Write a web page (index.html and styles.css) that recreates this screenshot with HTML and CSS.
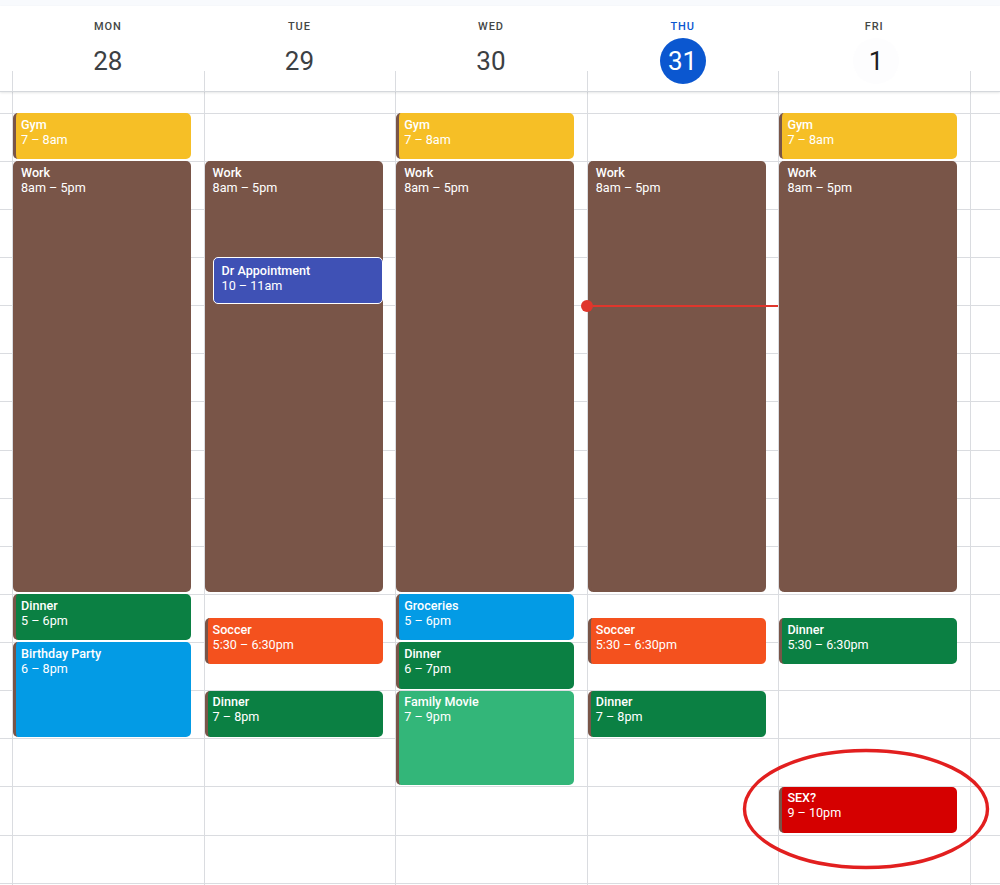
FILE: index.html
```html
<!DOCTYPE html>
<html>
<head>
<meta charset="utf-8">
<link rel="stylesheet" href="styles.css">
</head>
<body>
<div class="page">
  <div class="topband"></div>
  <div class="header">
    <div class="gutter"></div>
    <div class="day"><div class="dname">MON</div><div class="dnum">28</div></div>
    <div class="day"><div class="dname">TUE</div><div class="dnum">29</div></div>
    <div class="day"><div class="dname">WED</div><div class="dnum">30</div></div>
    <div class="day today"><div class="dname">THU</div><div class="dnum">31</div></div>
    <div class="day hover"><div class="dname">FRI</div><div class="dnum">1</div></div>
    <div class="day"></div>
  </div>
  <div class="body">
    <div class="gutter"></div>
    <div class="col">
      <div class="ev gym" style="grid-row: 2 / span 4"><b>Gym</b>7 – 8am</div>
      <div class="ev work" style="grid-row: 6 / span 36"><b>Work</b>8am – 5pm</div>
      <div class="ev basil" style="grid-row: 42 / span 4"><b>Dinner</b>5 – 6pm</div>
      <div class="ev peacock" style="grid-row: 46 / span 8"><b>Birthday Party</b>6 – 8pm</div>
    </div>
    <div class="col">
      <div class="ev work" style="grid-row: 6 / span 36"><b>Work</b>8am – 5pm</div>
      <div class="ev appt" style="grid-row: 14 / span 4"><b>Dr Appointment</b>10 – 11am</div>
      <div class="ev tangerine" style="grid-row: 44 / span 4"><b>Soccer</b>5:30 – 6:30pm</div>
      <div class="ev basil" style="grid-row: 50 / span 4"><b>Dinner</b>7 – 8pm</div>
    </div>
    <div class="col">
      <div class="ev gym" style="grid-row: 2 / span 4"><b>Gym</b>7 – 8am</div>
      <div class="ev work" style="grid-row: 6 / span 36"><b>Work</b>8am – 5pm</div>
      <div class="ev peacock" style="grid-row: 42 / span 4"><b>Groceries</b>5 – 6pm</div>
      <div class="ev basil" style="grid-row: 46 / span 4"><b>Dinner</b>6 – 7pm</div>
      <div class="ev sage" style="grid-row: 50 / span 8"><b>Family Movie</b>7 – 9pm</div>
    </div>
    <div class="col">
      <div class="ev work" style="grid-row: 6 / span 36"><b>Work</b>8am – 5pm</div>
      <div class="ev tangerine" style="grid-row: 44 / span 4"><b>Soccer</b>5:30 – 6:30pm</div>
      <div class="ev basil" style="grid-row: 50 / span 4"><b>Dinner</b>7 – 8pm</div>
      <div class="now" style="grid-row: 18"><span class="now-dot"></span><span class="now-line"></span></div>
    </div>
    <div class="col">
      <div class="ev gym" style="grid-row: 2 / span 4"><b>Gym</b>7 – 8am</div>
      <div class="ev work" style="grid-row: 6 / span 36"><b>Work</b>8am – 5pm</div>
      <div class="ev basil" style="grid-row: 44 / span 4"><b>Dinner</b>5:30 – 6:30pm</div>
      <div class="ev tomato" style="grid-row: 58 / span 4"><b>SEX?</b>9 – 10pm</div>
    </div>
    <div class="col"></div>
    <svg class="annot" width="248" height="122" viewBox="0 0 248 122">
      <ellipse cx="124" cy="61" rx="121.5" ry="58.5" fill="none" stroke="#e21f1f" stroke-width="3.4"/>
    </svg>
  </div>
</div>
</body>
</html>
```

FILE: styles.css
```css
* { box-sizing: border-box; }
html, body { margin: 0; padding: 0; background: #fff; }
body { font-family: Roboto, "Liberation Sans", sans-serif; }

.page { width: 1000px; height: 885px; overflow: hidden; }

.topband { height: 6px; background: #f8fafd; }

.header {
  display: grid;
  grid-template-columns: 12px repeat(6, 191.6px);
  height: 86px;
  border-bottom: 1px solid #d5d8dc;
  box-shadow: 0 1px 2px rgba(60, 64, 67, 0.12);
  position: relative;
  z-index: 2;
  background: #fff;
}

.day {
  display: flex;
  flex-direction: column;
  align-items: center;
  padding-top: 15px;
  background: linear-gradient(#dadce0, #dadce0) left bottom / 1px 20px no-repeat;
}

.dname {
  font-size: 11px;
  line-height: 12px;
  font-weight: 500;
  letter-spacing: 0.9px;
  color: #444746;
}

.dnum {
  width: 46px;
  height: 46px;
  margin-top: 5px;
  border-radius: 50%;
  display: flex;
  align-items: center;
  justify-content: center;
  font-size: 26px;
  color: #3c4043;
}

.today .dname { color: #0b57d0; }
.today .dnum { background: #0b57d0; color: #fff; }
.hover .dnum { background: #fdfdfe; color: #1f1f1f; margin-left: 4px; }

.body {
  position: relative;
  display: grid;
  grid-template-columns: 12px repeat(6, 191.6px);
  height: 793px;
  background: repeating-linear-gradient(to bottom,
    transparent 0 20.6px,
    #dadce0 20.6px 21.6px,
    transparent 21.6px 48.13px);
}

.col {
  border-left: 1px solid #dadce0;
  display: grid;
  grid-template-columns: 100%;
  grid-template-rows: 21px repeat(64, 12.0325px);
}

.ev {
  grid-column: 1;
  margin: 0 12.6px 2px 0;
  border-radius: 5px;
  border-left: 3px solid #795548;
  padding: 3.5px 5px 0;
  color: #fff;
  font-size: 12.6px;
  line-height: 15px;
  overflow: hidden;
  white-space: nowrap;
}
.ev b { display: block; font-weight: 500; }

.gym { background: #f6bf26; }
.work { background: #795548; }
.basil { background: #0b8043; }
.peacock { background: #039be5; }
.tangerine { background: #f4511e; }
.sage { background: #33b679; }
.tomato { background: #d50000; }
.appt {
  background: #3f51b5;
  border: 1px solid #fff;
  margin-left: 8px;
  padding: 4.5px 8px 0;
}

.now {
  grid-column: 1;
  align-self: start;
  margin-top: -1px;
  margin-left: -7px;
  height: 2px;
  display: flex;
  align-items: center;
}
.now-dot {
  flex: 0 0 12px;
  height: 12px;
  border-radius: 50%;
  background: #e0362c;
}
.now-line {
  flex: 1;
  height: 2px;
  background: #e0362c;
}

.annot {
  position: absolute;
  left: 742px;
  top: 656px;
}
```
